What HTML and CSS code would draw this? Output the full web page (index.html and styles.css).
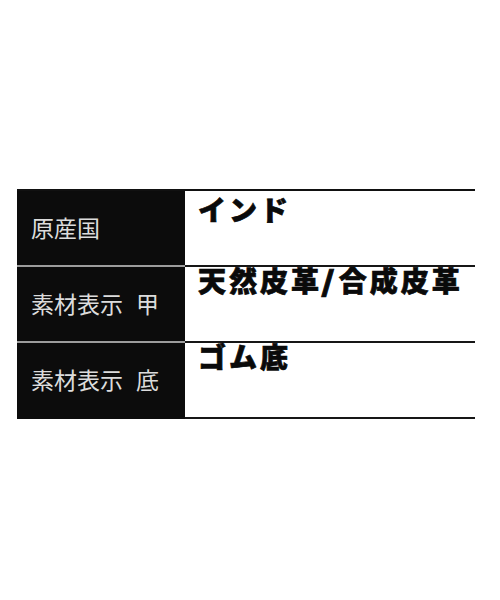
FILE: index.html
```html
<!DOCTYPE html>
<html lang="ja">
<head>
<meta charset="utf-8">
<title>商品情報</title>
<link rel="stylesheet" href="styles.css">
</head>
<body>
<div class="spec">
  <div class="spec__label">原産国</div>
  <div class="spec__value spec__value--first">インド</div>
  <div class="spec__label">素材表示<span class="spec__gap"></span>甲</div>
  <div class="spec__value">天然皮革<span class="spec__slash">/</span>合成皮革</div>
  <div class="spec__label spec__label--last">素材表示<span class="spec__gap"></span>底</div>
  <div class="spec__value">ゴム底</div>
</div>
</body>
</html>
```
FILE: styles.css
```css
html, body {
  margin: 0;
  padding: 0;
  background: #ffffff;
}

body {
  font-family: "Noto Sans CJK JP", "Noto Sans", sans-serif;
}

.spec {
  margin: 189px 0 0 17px;
  width: 458px;
  display: grid;
  grid-template-columns: 168px 1fr;
  grid-auto-rows: 76px;
  border-top: 2px solid #111111;
}

.spec__label {
  background: #0c0c0c;
  color: #dcdcdc;
  font-size: 23px;
  font-weight: 400;
  line-height: 24px;
  display: flex;
  align-items: center;
  padding: 0 0 3px 14px;
  border-bottom: 2px solid #9c9c9c;
  box-sizing: border-box;
  white-space: nowrap;
}

.spec__label--last {
  border-bottom-color: #0c0c0c;
}

.spec__gap {
  display: inline-block;
  width: 13px;
}

.spec__value {
  background: #ffffff;
  color: #0a0a0a;
  font-size: 28px;
  font-weight: 900;
  line-height: 26px;
  letter-spacing: 3px;
  -webkit-text-stroke: 0.7px #0a0a0a;
  padding: 0 0 0 13px;
  border-bottom: 2px solid #161616;
  box-sizing: border-box;
  white-space: nowrap;
}

.spec__value--first {
  padding-top: 5px;
}

.spec__slash {
  display: inline-block;
  margin: 0 2px 0 1px;
  transform: scaleX(1.3);
}
```
